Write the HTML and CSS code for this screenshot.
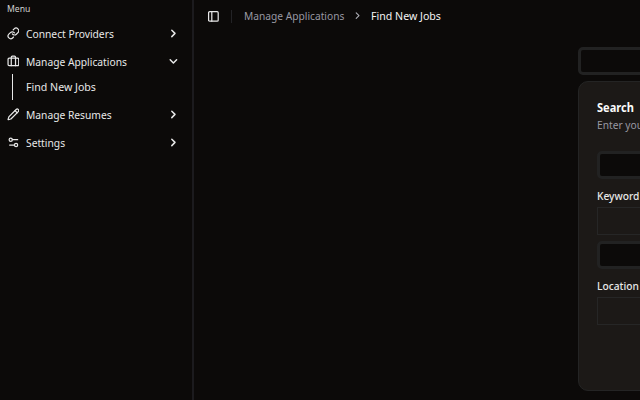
FILE: index.html
```html
<!DOCTYPE html>
<html lang="en">
<head>
<meta charset="utf-8">
<title>Find New Jobs</title>
<link rel="stylesheet" href="styles.css">
</head>
<body>
<div class="app">
  <aside class="sidebar">
    <div class="group-label">Menu</div>
    <nav class="menu">
      <a class="item"><svg class="icon" viewBox="0 0 24 24"><path d="M10 13a5 5 0 0 0 7.54.54l3-3a5 5 0 0 0-7.07-7.07l-1.72 1.71"/><path d="M14 11a5 5 0 0 0-7.54-.54l-3 3a5 5 0 0 0 7.07 7.07l1.71-1.71"/></svg><span class="label">Connect Providers</span><svg class="icon chevron" viewBox="0 0 24 24"><path d="m9 18 6-6-6-6"/></svg></a>
      <a class="item"><svg class="icon" viewBox="0 0 24 24"><rect x="2" y="6" width="20" height="14" rx="2"/><path d="M16 20V4a2 2 0 0 0-2-2h-4a2 2 0 0 0-2 2v16"/></svg><span class="label">Manage Applications</span><svg class="icon chevron" viewBox="0 0 24 24"><path d="m6 9 6 6 6-6"/></svg></a>
      <div class="submenu"><a class="subitem">Find New Jobs</a></div>
      <a class="item"><svg class="icon" viewBox="0 0 24 24"><path d="M21.17 6.81a1 1 0 0 0-3.99-3.99L3.84 16.17a2 2 0 0 0-.5.83l-1.32 4.35a.5.5 0 0 0 .62.62l4.35-1.32a2 2 0 0 0 .83-.5z"/><path d="m15 5 4 4"/></svg><span class="label">Manage Resumes</span><svg class="icon chevron" viewBox="0 0 24 24"><path d="m9 18 6-6-6-6"/></svg></a>
      <a class="item"><svg class="icon" viewBox="0 0 24 24"><path d="M10 7h10M14 17H5"/><circle cx="17" cy="17" r="3"/><circle cx="7" cy="7" r="3"/></svg><span class="label">Settings</span><svg class="icon chevron" viewBox="0 0 24 24"><path d="m9 18 6-6-6-6"/></svg></a>
    </nav>
  </aside>
  <main class="main">
    <header class="topbar">
      <svg class="icon" viewBox="0 0 24 24"><rect x="3" y="3" width="18" height="18" rx="2"/><path d="M9 3v18"/></svg>
      <span class="separator"></span>
      <span class="crumb">Manage Applications</span>
      <svg class="icon crumb-chevron" viewBox="0 0 24 24"><path d="m9 18 6-6-6-6"/></svg>
      <span class="crumb-current">Find New Jobs</span>
    </header>
    <section class="content">
      <div class="box"></div>
      <div class="card">
        <h1 class="title">Search</h1>
        <p class="description">Enter you</p>
        <div class="box"></div>
        <label class="field-label">Keyword</label>
        <div class="input"></div>
        <div class="box"></div>
        <label class="field-label">Location</label>
        <div class="input"></div>
      </div>
    </section>
  </main>
</div>
</body>
</html>
```
FILE: styles.css
```css
* { box-sizing: border-box; }
body {
  margin: 0;
  overflow: hidden;
  background: #0c0a09;
  color: #e8e8e8;
  font: 500 11.6px/16px "Noto Sans", sans-serif;
}
.app { display: flex; width: 640px; height: 400px; overflow: hidden; }
.sidebar {
  flex: none;
  width: 194px;
  padding: 0 12px 0 6.5px;
  border-right: 2px solid #1c1b1e;
}
/* Condensed text, anchored at its left edge */
.group-label, .label, .subitem, .crumb, .crumb-current, .title, .description, .field-label {
  transform: scaleX(0.88);
  transform-origin: left center;
}
.group-label { height: 21px; padding-top: 1.4px; font-size: 9.8px; font-weight: 400; color: #d0d0d0; }
.menu { display: flex; flex-direction: column; gap: 2.4px; }
.item { display: flex; align-items: center; gap: 6.4px; height: 25.6px; }
.label { flex: 1; white-space: nowrap; font-weight: 450; transform: scaleX(0.885); }
.icon {
  flex: none;
  width: 12.8px;
  height: 12.8px;
  fill: none;
  stroke: currentColor;
  stroke-width: 2.3;
  stroke-linecap: round;
  stroke-linejoin: round;
}
.chevron { stroke-width: 2.8; }
.submenu {
  display: flex;
  align-items: center;
  height: 25.6px;
  margin: -3px 0 0 5.5px;
  border-left: 1px solid #e8e8e8;
}
.subitem { margin-left: 12.8px; font-weight: 450; transform: scaleX(0.915); }
.main { flex: none; width: 760px; }
.topbar { display: flex; align-items: center; height: 32px; padding-left: 13px; white-space: nowrap; font-weight: 450; }
.separator { width: 1px; height: 13px; margin: 0 12px 0 11px; background: #232326; }
.crumb { margin-right: -13px; color: #9898a2; }
.crumb-chevron { width: 11.2px; height: 11.2px; margin: 0 8px 0 7px; color: #b0b0b8; }
.crumb-current { color: #f4f4f4; transform: scaleX(0.915); }
.content { width: 360px; margin: 14.5px 0 0 383.6px; }
.box { height: 28px; border: 3px solid #222222; border-radius: 5px; background: #0c0a09; }
.card {
  height: 310px;
  margin-top: 6.5px;
  padding: 17px 18px;
  border: 1px solid #242424;
  border-radius: 10px;
  background: #1c1917;
}
.title { margin: 0; color: #fafafa; font-size: 13px; line-height: 17px; font-weight: 700; transform: scaleX(0.85); }
.description { margin: 1px 0 18px; color: #9898a2; font-weight: 450; white-space: nowrap; }
.field-label { display: block; margin: 9px 0 3px; font-weight: 500; }
.input { height: 28px; margin-bottom: 6px; border: 1px solid #262626; }
```
